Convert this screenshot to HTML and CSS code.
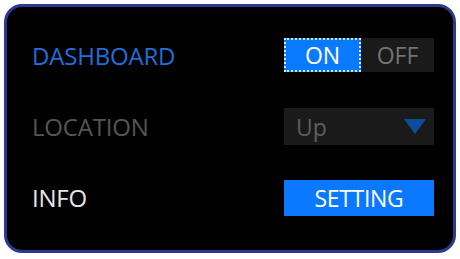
FILE: index.html
```html
<!DOCTYPE html>
<html lang="en">
  <head>
    <title>Panel</title>
    <meta name="viewport" content="width=device-width, initial-scale=1" />
    <link rel="stylesheet" href="styles.css">
  </head>
  <body>
    <div class="panel">
      <div class="fila">
        <span class="etiqueta dashboard">DASHBOARD</span>
        <div class="toggle">
          <span class="opcion activa">ON</span>
          <span class="opcion">OFF</span>
        </div>
      </div>
      <div class="fila">
        <span class="etiqueta location">LOCATION</span>
        <div class="select">
          <span>Up</span>
          <svg class="flecha" width="22" height="15" viewBox="0 0 22 15"><polygon points="0,0 22,0 11,15" fill="#0b4c9c"/></svg>
        </div>
      </div>
      <div class="fila">
        <span class="etiqueta info">INFO</span>
        <button class="boton">SETTING</button>
      </div>
    </div>
  </body>
</html>
```

FILE: styles.css
```css
body {
  margin: 0;
  background-color: #ffffff;
  font-family: "Open Sans", "Noto Sans", sans-serif;
}

.panel {
  box-sizing: border-box;
  margin: 4px;
  width: 452px;
  height: 249px;
  background-color: #000000;
  border: 3px solid #2b3a8c;
  border-radius: 18px;
  padding: 13px 19px 0 25px;
  display: grid;
  grid-template-rows: 71px 71px 71px;
}

.fila {
  display: grid;
  grid-template-columns: 1fr 150px;
  align-items: center;
}

.etiqueta {
  font-size: 24px;
  letter-spacing: -0.2px;
}

.dashboard {
  color: #1f6fd8;
}

.location {
  color: #555555;
}

.info {
  color: #e6e6e6;
}

.toggle {
  display: flex;
  height: 34px;
  margin-top: -1px;
  background-color: #1a1a1a;
}

.opcion {
  flex: 1;
  display: flex;
  align-items: center;
  justify-content: center;
  font-size: 23px;
  color: #727272;
}

.opcion.activa {
  background-color: #0a7bff;
  color: #ffffff;
  border: 2px dotted #d8e8ff;
  box-sizing: border-box;
}

.select {
  height: 37px;
  background-color: #1a1a1a;
  display: flex;
  align-items: center;
  justify-content: space-between;
  padding: 0 8px 0 12px;
  font-size: 23px;
  color: #5e5e5e;
}

.boton {
  height: 36px;
  border: none;
  background-color: #0a78ff;
  color: #ffffff;
  font-family: "Open Sans", "Noto Sans", sans-serif;
  font-size: 23px;
  letter-spacing: -0.3px;
  padding: 0;
}
```
